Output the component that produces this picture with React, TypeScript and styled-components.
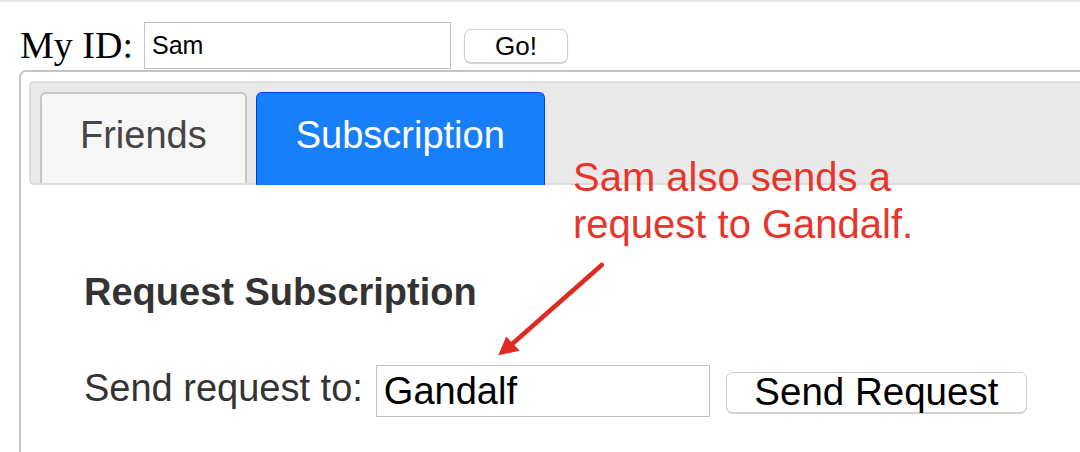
import React from 'react';
import styled, { createGlobalStyle } from 'styled-components';

const GlobalStyle = createGlobalStyle`
  html, body {
    margin: 0;
    padding: 0;
    background: #ffffff;
    overflow: hidden;
  }

  body {
    font-family: "Liberation Sans", Arial, sans-serif;
  }
`;

const Page = styled.div`
  position: relative;
  width: 1080px;
  height: 452px;
  box-sizing: border-box;
  border-top: 2px solid #e4e4e4;
  padding: 20px 0 0 19px;
  overflow: hidden;
`;

const IdRow = styled.div`
  display: flex;
  align-items: center;
  height: 47px;
  margin-left: 1px;
`;

const IdLabel = styled.label`
  font-family: "Liberation Serif", "Times New Roman", serif;
  font-size: 38px;
  color: #000;
  line-height: 47px;
  margin-right: 11px;
`;

const TextInput = styled.input<{ $w: number; $h: number; $size: number }>`
  box-sizing: border-box;
  width: ${(p) => p.$w}px;
  height: ${(p) => p.$h}px;
  border: 1px solid #c3c3c3;
  border-radius: 0;
  padding: 0 7px;
  margin: 0;
  font-family: "Liberation Sans", Arial, sans-serif;
  font-size: ${(p) => p.$size}px;
  color: #000;
  background: #fff;
  outline: none;
`;

const PushButton = styled.button<{ $w: number; $h: number; $size: number }>`
  box-sizing: border-box;
  width: ${(p) => p.$w}px;
  height: ${(p) => p.$h}px;
  margin: 0 0 0 13px;
  padding: 0;
  border: 1px solid #cfcfcf;
  border-radius: 7px;
  background: #ffffff;
  box-shadow: 0 1px 1px rgba(0, 0, 0, 0.18);
  font-family: "Liberation Sans", Arial, sans-serif;
  font-size: ${(p) => p.$size}px;
  color: #000;
  line-height: 1;
`;

const Panel = styled.div`
  box-sizing: border-box;
  margin-top: 1px;
  margin-right: -40px;
  border: 2px solid #c5c5c5;
  border-radius: 7px 0 0 0;
  padding: 9px 8px 0 8px;
  height: 420px;
`;

const TabBar = styled.ul`
  box-sizing: border-box;
  display: flex;
  align-items: flex-end;
  gap: 9px;
  list-style: none;
  margin: 0;
  padding: 9px 0 0 9px;
  height: 104px;
  background: #e9e9e9;
  border: 2px solid #dddddd;
  border-radius: 5px 0 0 5px;
  border-right: none;
`;

const Tab = styled.li<{ $active?: boolean }>`
  box-sizing: border-box;
  height: ${(p) => (p.$active ? 93 : 91)}px;
  margin-bottom: ${(p) => (p.$active ? -2 : 0)}px;
  padding: ${(p) => (p.$active ? '21px 39px 0' : '20px 38px 0')};
  line-height: 42px;
  font-size: 38px;
  border: ${(p) => (p.$active ? '1px solid #003eff' : '2px solid #c5c5c5')};
  border-bottom: none;
  border-radius: 6px 6px 0 0;
  background: ${(p) => (p.$active ? '#187ffb' : '#f6f6f6')};
  color: ${(p) => (p.$active ? '#ffffff' : '#454545')};
`;

const Content = styled.div`
  padding: 86px 0 40px 55px;
  color: #333;
`;

const Heading = styled.h3`
  margin: 0;
  font-size: 38px;
  font-weight: bold;
  line-height: 42px;
  color: #333;
`;

const SendRow = styled.div`
  display: flex;
  align-items: center;
  margin-top: 52px;
  height: 52px;
`;

const SendLabel = styled.label`
  font-size: 38px;
  line-height: 42px;
  color: #333;
  margin-right: 13px;
  margin-top: -6px;
`;

const SendButton = styled(PushButton)`
  margin-left: 16px;
  margin-top: 2px;
`;

const Note = styled.div`
  position: absolute;
  left: 573px;
  top: 152px;
  font-size: 40px;
  line-height: 46.5px;
  color: #e8352b;
  pointer-events: none;
`;

const Arrow = styled.svg`
  position: absolute;
  left: 490px;
  top: 255px;
  pointer-events: none;
`;

export default function App(): React.ReactElement {
  return (
    <>
      <GlobalStyle />
      <Page>
        <IdRow>
          <IdLabel>My ID:</IdLabel>
          <TextInput $w={307} $h={47} $size={25} defaultValue="Sam" />
          <PushButton $w={104} $h={34} $size={26}>Go!</PushButton>
        </IdRow>
        <Panel>
          <TabBar>
            <Tab>Friends</Tab>
            <Tab $active>Subscription</Tab>
          </TabBar>
          <Content>
            <Heading>Request Subscription</Heading>
            <SendRow>
              <SendLabel>Send request to:</SendLabel>
              <TextInput $w={334} $h={52} $size={38} defaultValue="Gandalf" />
              <SendButton $w={301} $h={41} $size={38.5}>Send Request</SendButton>
            </SendRow>
          </Content>
        </Panel>
        <Note>
          Sam also sends a
          <br />
          request to Gandalf.
        </Note>
        <Arrow width="120" height="105" viewBox="0 0 120 105">
          <line x1="111.7" y1="8" x2="21" y2="88" stroke="#df2a20" strokeWidth="4.5" strokeLinecap="round" />
          <polygon points="8.3,98.3 16.2,79.5 29.8,93.8" fill="#df2a20" />
        </Arrow>
      </Page>
    </>
  );
}
